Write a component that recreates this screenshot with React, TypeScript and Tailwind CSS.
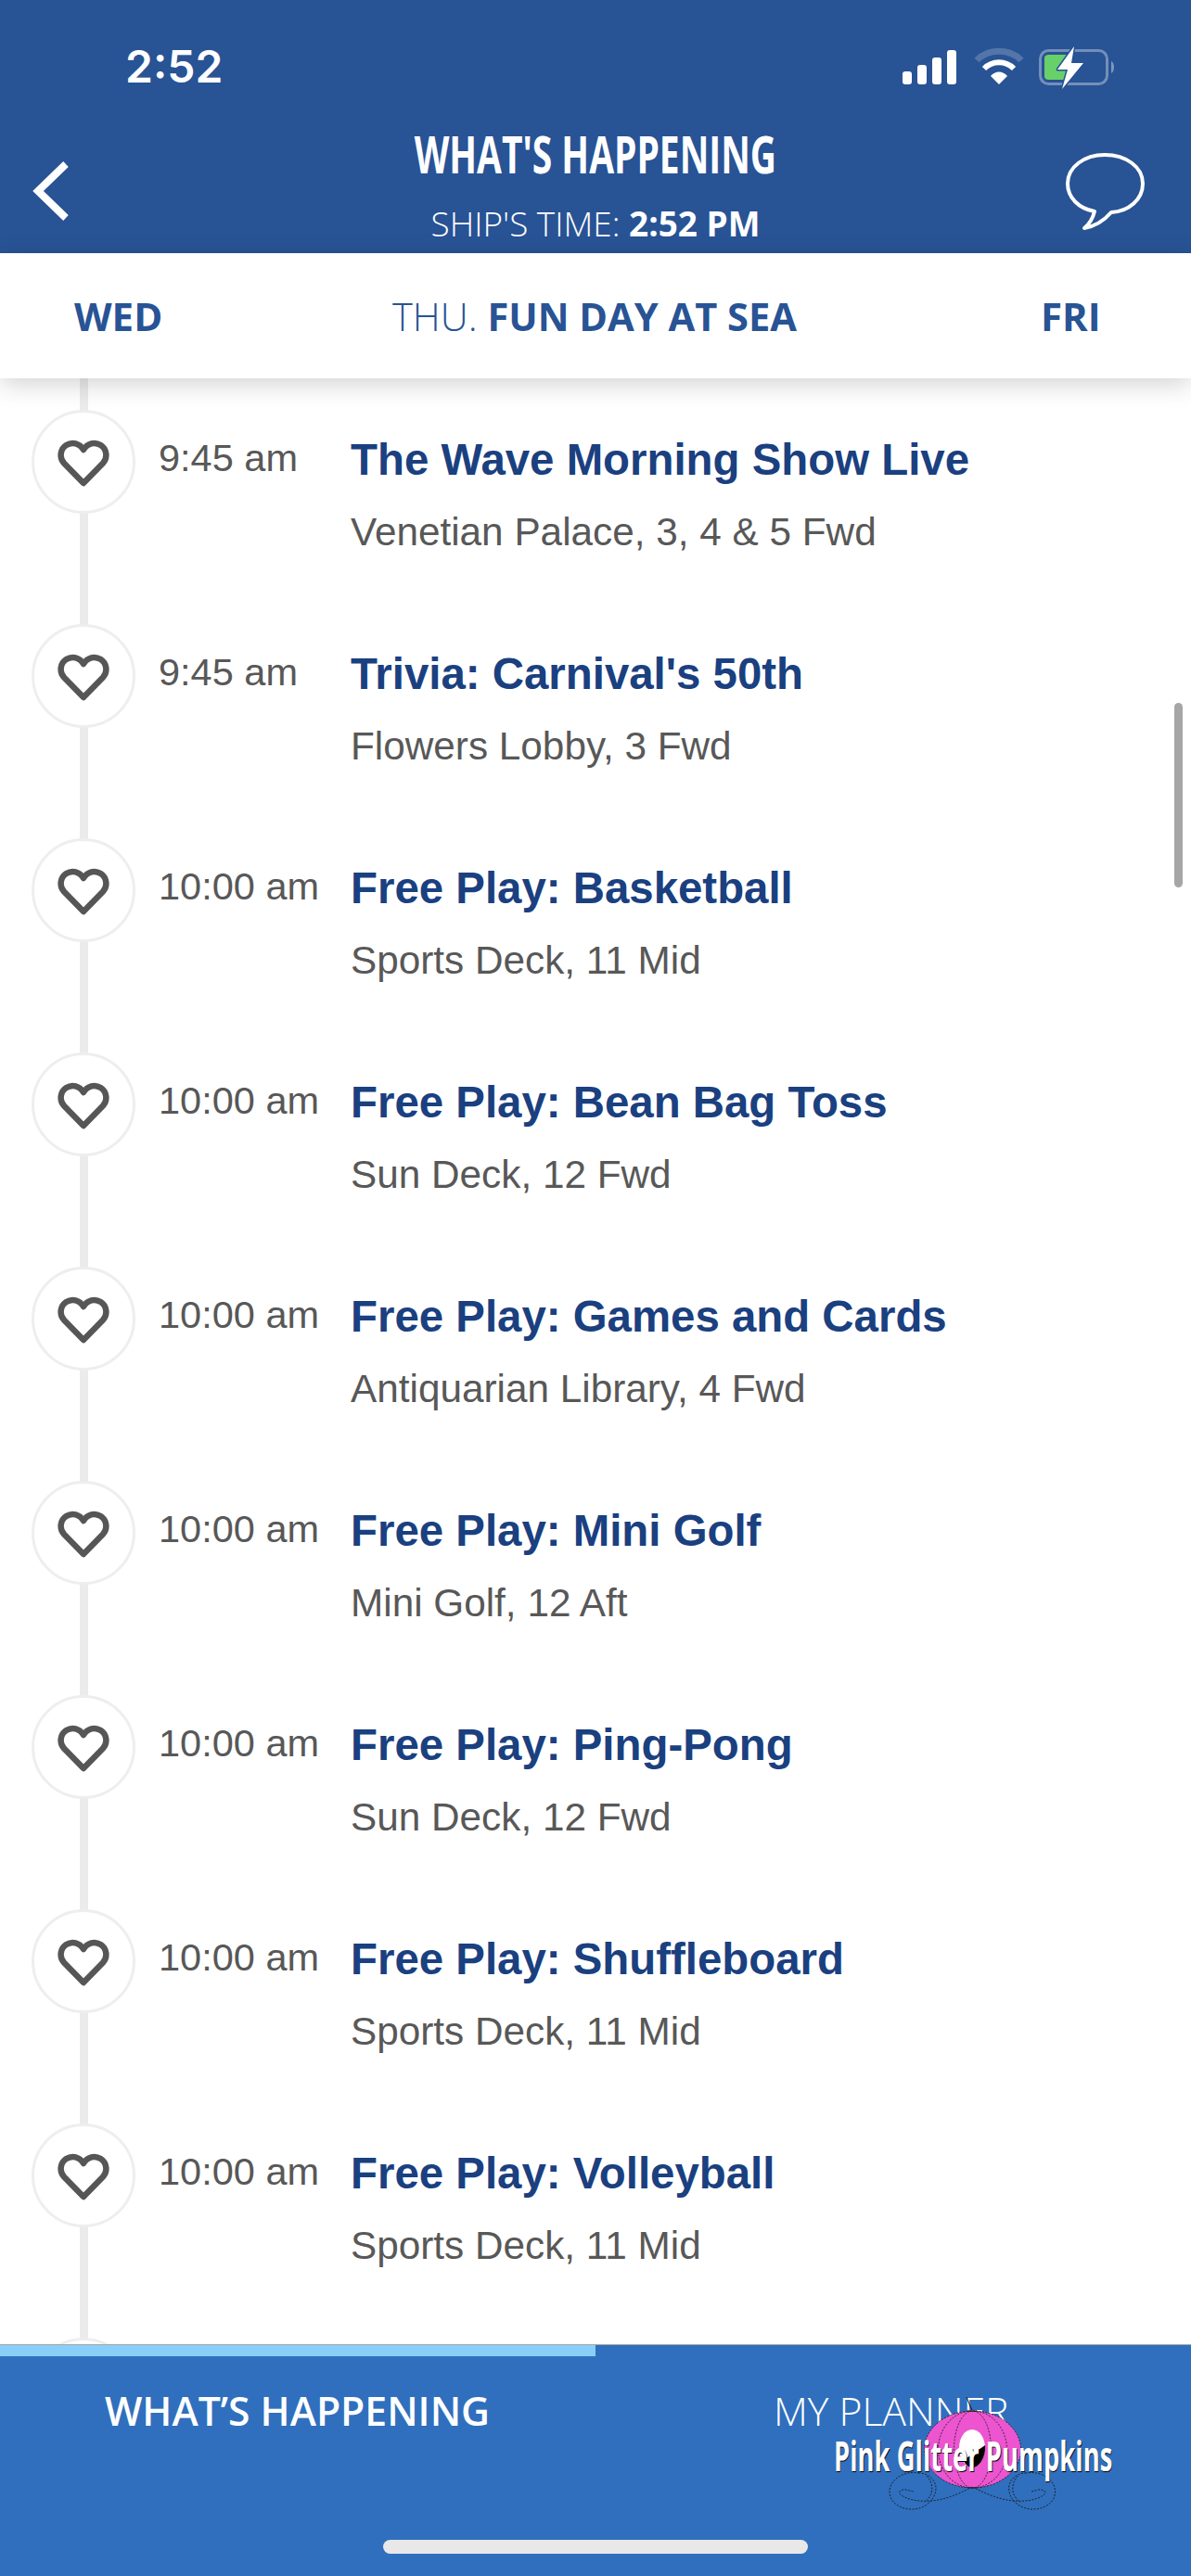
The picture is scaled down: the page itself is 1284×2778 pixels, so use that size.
const rows = [
  ["9:45 am", "The Wave Morning Show Live", "Venetian Palace, 3, 4 & 5 Fwd"],
  ["9:45 am", "Trivia: Carnival's 50th", "Flowers Lobby, 3 Fwd"],
  ["10:00 am", "Free Play: Basketball", "Sports Deck, 11 Mid"],
  ["10:00 am", "Free Play: Bean Bag Toss", "Sun Deck, 12 Fwd"],
  ["10:00 am", "Free Play: Games and Cards", "Antiquarian Library, 4 Fwd"],
  ["10:00 am", "Free Play: Mini Golf", "Mini Golf, 12 Aft"],
  ["10:00 am", "Free Play: Ping-Pong", "Sun Deck, 12 Fwd"],
  ["10:00 am", "Free Play: Shuffleboard", "Sports Deck, 11 Mid"],
  ["10:00 am", "Free Play: Volleyball", "Sports Deck, 11 Mid"],
  ["", "", ""],
];

function Heart() {
  return (
    <svg className="mt-[3px]" width="56" height="53" viewBox="0 0 56 53" fill="none">
      <path
        d="M28 48 L7 26.5 C1.5 20.5 3 11 9.5 7 C16 3 23.5 5 28 12 C32.5 5 40 3 46.5 7 C53 11 54.5 20.5 49 26.5 Z"
        stroke="#565656"
        strokeWidth="6.5"
        strokeLinejoin="round"
      />
    </svg>
  );
}

function StatusIcons() {
  return (
    <div className="mt-[5px] flex items-center">
      <svg width="232" height="44" viewBox="0 0 232 44" fill="none" className="overflow-visible">
        <rect x="0" y="25" width="10" height="14" rx="3" fill="#fff" />
        <rect x="16" y="18" width="10" height="21" rx="3" fill="#fff" />
        <rect x="32" y="10" width="10" height="29" rx="3" fill="#fff" />
        <rect x="48" y="2" width="10" height="37" rx="3" fill="#fff" />
        <path d="M80 13 C92 0 116 0 128 13" stroke="#fff" strokeOpacity="0.2" strokeWidth="7" fill="none" />
        <path d="M88 22 C97 13 111 13 120 22" stroke="#fff" strokeWidth="6" fill="none" />
        <path d="M95 30 C100 24 108 24 113 30 L104 39 Z" fill="#fff" />
        <rect x="148.5" y="2.5" width="72" height="36" rx="9" stroke="#fff" strokeOpacity="0.35" strokeWidth="3" />
        <path d="M225 14 C229 16 229 25 225 27 Z" fill="#fff" fillOpacity="0.4" />
        <path d="M158 7 H181 V34 H158 C155 34 153 33 153 30 V11 C153 8 155 7 158 7 Z" fill="#68d068" />
        <path d="M185 -2 L167 23 H178 L172 44 L195 16 H182 Z" fill="#fff" stroke="#285395" strokeWidth="3" strokeLinejoin="round" paintOrder="stroke" />
      </svg>
    </div>
  );
}

const dash = { stroke: "#111", strokeWidth: 0.8, strokeDasharray: "2 1.5" };

function Swirl() {
  return (
    <g {...dash}>
      <path d="M129 91 C112 100 98 105 84 106 C72 107 60 105 53 100 C48 97 52 93 58 94 C62 95 66 96 66 96" />
      <path d="M72 76 C54 73 40 84 40 96 C40 108 52 115 64 115 C78 115 90 105 90 92 C90 84 82 76 72 76 Z" />
      <path d="M80 79 C88 87 88 100 78 107" />
    </g>
  );
}

function Pumpkin() {
  return (
    <svg className="absolute left-[20px] top-[-40px] overflow-visible" width="260" height="130" viewBox="0 0 260 130" fill="none">
      <ellipse cx="129.5" cy="50.5" rx="52" ry="41.5" fill="#ec55cf" />
      <g {...dash}>
        <ellipse cx="129.5" cy="50.5" rx="52" ry="41.5" />
        <ellipse cx="129.5" cy="50.5" rx="37" ry="41.5" />
        <ellipse cx="129.5" cy="50.5" rx="20" ry="41.5" />
      </g>
      <path d="M123 -6 C125 -2 126 3 129 8 M124 9 H134" stroke="#111" strokeWidth="1" />
      <ellipse cx="129" cy="49" rx="14" ry="20" fill="#fff" />
      <path d="M143 46 C144 60 136 70 129 70 C125 70 121 66 120 62 Z" fill="#000" />
      <Swirl />
      <g transform="translate(258.6 0) scale(-1 1)">
        <Swirl />
      </g>
    </svg>
  );
}

export default function App() {
  return (
    <div className="relative flex h-[2778px] w-[1284px] flex-col overflow-hidden bg-white font-['Liberation_Sans',sans-serif]">
      <header className="relative h-[273px] shrink-0 bg-[#285395] text-white">
        <div className="flex h-[141px] items-start justify-between pl-[135px] pr-[79px] pt-[47px]">
          <span className="font-['Inter',sans-serif] text-[48px] font-semibold leading-[50px]">2:52</span>
          <StatusIcons />
        </div>
        <div className="flex flex-col items-center">
          <h1 className="scale-x-[0.695] whitespace-nowrap font-['Open_Sans',sans-serif] text-[56px] font-bold leading-[48px]">WHAT'S HAPPENING</h1>
          <p className="mt-[32px] whitespace-nowrap font-['Open_Sans',sans-serif] text-[36.9px] font-light leading-[40px]">
            SHIP'S TIME: <b className="font-bold">2:52 PM</b>
          </p>
        </div>
        <svg className="absolute left-[33px] top-[172px]" width="46" height="68" viewBox="0 0 46 68" fill="none">
          <path d="M38 5 L8 34 L38 63" stroke="#fff" strokeWidth="8" />
        </svg>
        <svg className="absolute left-[1147px] top-[163px]" width="90" height="88" viewBox="0 0 90 88" fill="none">
          <path d="M44 4 C22 4 4 17 4 35 C4 50 16 62 33 65 C31 73 27 79 22 83 C34 81 44 74 51 66 C70 65 85 52 85 35 C85 17 67 4 44 4 Z" stroke="#fff" strokeWidth="4" strokeLinejoin="round" />
        </svg>
      </header>

      <nav className="relative z-10 flex h-[135px] shrink-0 items-center justify-between bg-white pl-[80px] pr-[103px] font-['Open_Sans',sans-serif] text-[42px] leading-[50px] text-[#285395] shadow-[0_6px_26px_rgba(0,0,0,0.18)]">
        <span className="w-[94px] whitespace-nowrap font-bold">WED</span>
        <span className="mr-[14px] whitespace-nowrap text-[41.6px] font-light">THU. <b className="font-bold">FUN DAY AT SEA</b></span>
        <span className="w-[59px] whitespace-nowrap font-bold">FRI</span>
      </nav>

      <main className="relative min-h-0 flex-1 overflow-hidden pt-[34px]">
        <div className="absolute bottom-0 left-[86px] top-0 w-[9px] bg-[#ebebeb]" />
        <div className="absolute left-[1266px] top-[350px] h-[199px] w-[9px] rounded-full bg-[#a6a6a6]" />
        {rows.map((r, i) => (
          <div key={i} className="relative flex h-[231px] pl-[34px]">
            <div className="flex h-[112px] w-[112px] shrink-0 items-center justify-center rounded-full border-[3px] border-[#eeeeee] bg-white">
              <Heart />
            </div>
            <div className="ml-[25px] w-[207px] shrink-0 pt-[28px] text-[41.5px] leading-[48px] text-[#585858]">{r[0]}</div>
            <div className="min-w-0 flex-1">
              <div className="pt-[28px] text-[47.4px] font-bold leading-[52px] text-[#1a4080]">{r[1]}</div>
              <div className="mt-[28px] text-[42.3px] leading-[48px] text-[#585858]">{r[2]}</div>
            </div>
          </div>
        ))}
      </main>

      <footer className="relative h-[250px] shrink-0 border-t border-[#a8a8a8] bg-[#306fbd] font-['Open_Sans',sans-serif] text-[42.7px] text-white">
        <div className="h-[12px] w-[642px] bg-[#89cff8]" />
        <div className="flex pl-[113px] pt-[31px]">
          <span className="w-[721px] whitespace-nowrap font-semibold leading-[56px]">WHAT’S HAPPENING</span>
          <span className="whitespace-nowrap font-light leading-[56px]">MY PLANNER</span>
        </div>
        <div className="absolute left-[413px] top-[210px] h-[15px] w-[458px] rounded-full bg-[#e8e8e8]" />
        <div className="absolute left-[899px] top-[102px] h-[36px] w-[300px]">
          <Pumpkin />
          <span className="relative block origin-left scale-x-[0.623] whitespace-nowrap font-['Open_Sans',sans-serif] text-[44px] font-bold leading-[34px] text-white [text-shadow:1px_1px_0_#000]">Pink Glitter Pumpkins</span>
        </div>
      </footer>
    </div>
  );
}
